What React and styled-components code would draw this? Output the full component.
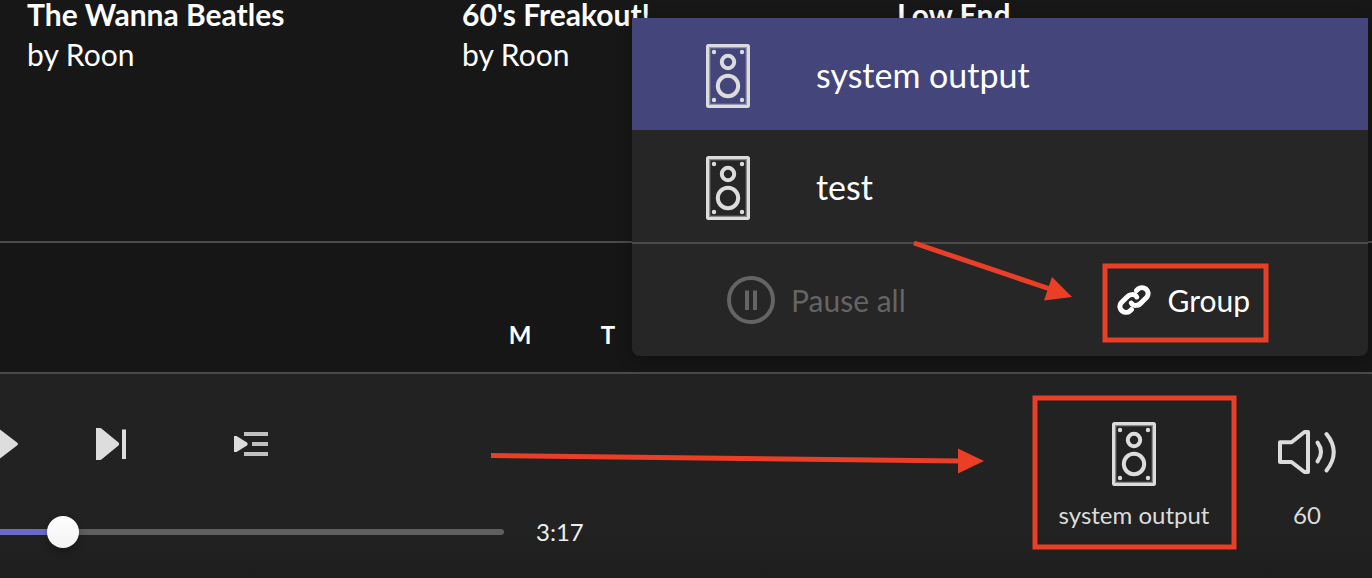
import { useState } from "react";
import styled, { createGlobalStyle } from "styled-components";

const GlobalStyle = createGlobalStyle`
* {
    box-sizing: border-box;
}
body {
    margin: 0;
    background: #171717;
    color: #ffffff;
    font-family: Lato, "Liberation Sans", sans-serif;
}
button, input {
    font: inherit;
    color: inherit;
}
`

const albums = [
    { title: "The Wanna Beatles", by: "by Roon" },
    { title: "60's Freakout!", by: "by Roon" },
    { title: "Low End" },
]

const days = ["M", "T"]
const zones = ["system output", "test"]

const SpeakerIcon = () => (
    <svg width="44" height="64" viewBox="0 0 44 64" fill="none" stroke="currentColor" aria-hidden="true">
        <rect x="1.5" y="1.5" width="41" height="61" rx="1" strokeWidth="3" />
        <rect x="3.5" y="3.5" width="37" height="57" strokeWidth="1.6" opacity="0.55" />
        <circle cx="22" cy="18" r="6.2" strokeWidth="4" />
        <circle cx="22" cy="42" r="10.2" strokeWidth="4" />
        <g fill="currentColor" stroke="none">
            <circle cx="8" cy="8" r="2.2" />
            <circle cx="36" cy="8" r="2.2" />
            <circle cx="8" cy="56" r="2.2" />
            <circle cx="36" cy="56" r="2.2" />
        </g>
    </svg>
)

const VolumeIcon = () => (
    <svg width="60" height="64" viewBox="0 0 60 64" fill="none" stroke="currentColor" strokeWidth="4" strokeLinecap="round" strokeLinejoin="round" aria-hidden="true">
        <path d="M3 20.2 H14.5 L27.5 10 H31 V50 H27.5 L14.5 40 H3 Z" />
        <path d="M40.5 20.5 Q47.5 30 40.5 39.5" />
        <path d="M49.5 12 Q64 30 49.5 48.5" />
    </svg>
)

const PauseIcon = () => (
    <svg width="48" height="48" viewBox="0 0 48 48" fill="none" stroke="currentColor" aria-hidden="true">
        <circle cx="24" cy="24" r="22" strokeWidth="4" />
        <path d="M20 14.5 V34 M28 14.5 V34" strokeWidth="4" />
    </svg>
)

const LinkIcon = () => (
    <svg width="34" height="30" viewBox="0 0 34 30" fill="none" stroke="currentColor" strokeWidth="5" strokeLinecap="round" aria-hidden="true">
        <path d="M19.5 5.5 L21 4 C26 0 34 5.5 30 12 L24.5 17.5 C21.5 21 16 21.5 14.3 18" />
        <path d="M14.5 24.5 L13 26 C8 30 0 24.5 4 18 L9.5 12.5 C12.5 9 18 8.5 19.7 12" />
    </svg>
)

const PlayIcon = () => (
    <svg width="20" height="44" viewBox="0 0 20 44" fill="currentColor" aria-hidden="true">
        <path d="M-6 3 L17 20.5 Q19 22 17 23.5 L-6 41 Z" />
    </svg>
)

const NextIcon = () => (
    <svg width="30" height="44" viewBox="0 0 30 44" fill="currentColor" aria-hidden="true">
        <path d="M0 6 H4 Q5 6 6 7 L22.5 20.5 Q24 22 22.5 23.5 L6 37 Q5 38 4 38 H0 Z" />
        <rect x="26" y="7.5" width="4" height="29.5" />
    </svg>
)

const QueueIcon = () => (
    <svg width="34" height="44" viewBox="0 0 34 44" fill="currentColor" aria-hidden="true">
        <path d="M0 14 H2.5 L13 20.5 Q14.5 22 13 23.5 L2.5 30 H0 Z" />
        <path d="M10 10 H34 V14 H10 Z M18 20 H34 V24 H18 Z M10 30 H34 V34 H10 Z" opacity="0.85" />
    </svg>
)

const Player = () => {
    const [position, setPosition] = useState(10)

    return (
        <Controls>
            <Transport>
                <IconButton aria-label="Play"><PlayIcon /></IconButton>
                <IconButton aria-label="Next" $space={76}><NextIcon /></IconButton>
                <IconButton aria-label="Queue" $space={108}><QueueIcon /></IconButton>
            </Transport>
            <SeekRow>
                <Seek
                    type="range"
                    aria-label="Track position"
                    value={position}
                    $value={position}
                    onChange={(e) => setPosition(Number(e.target.value))}
                />
                <span>3:17</span>
            </SeekRow>
        </Controls>
    )
}

const App = () => {
    const [zone, setZone] = useState("system output")

    return (
        <Page>
            <GlobalStyle />
            <Albums>
                {albums.map((album) => (
                    <Album key={album.title}>
                        <h3>{album.title}</h3>
                        {album.by && <p>{album.by}</p>}
                    </Album>
                ))}
            </Albums>
            <Days>
                {days.map((day) => <span key={day}>{day}</span>)}
            </Days>
            <Footer>
                <Player />
                <Outputs>
                    <OutputButton>
                        <SpeakerIcon />
                        <span>{zone}</span>
                    </OutputButton>
                    <OutputButton $narrow aria-label="Volume 60">
                        <VolumeIcon />
                        <span>60</span>
                    </OutputButton>
                </Outputs>
                <ZoneMenu>
                    {zones.map((name) => (
                        <ZoneRow key={name} $active={name === zone} onClick={() => setZone(name)}>
                            <SpeakerIcon />
                            <span>{name}</span>
                        </ZoneRow>
                    ))}
                    <MenuActions>
                        <ActionButton disabled><PauseIcon />Pause all</ActionButton>
                        <ActionButton><LinkIcon />Group</ActionButton>
                    </MenuActions>
                </ZoneMenu>
                {/* red boxes and arrows over the menu and the footer */}
                <Marks width="892" height="348" viewBox="480 230 892 348" aria-hidden="true">
                    <rect x="1105" y="266" width="161" height="74" />
                    <rect x="1035" y="398" width="199" height="149" />
                    <path d="M914 243 L1050 289" />
                    <path d="M491 455.5 L960 461" />
                    <polygon points="1072,297 1052,277 1044,300.5" />
                    <polygon points="984,461 958,448.5 958,473.5" />
                </Marks>
            </Footer>
        </Page>
    )
}

export default App;

const Page = styled.div`
display: flex;
flex-direction: column;
min-height: 100vh;
overflow: hidden;
`

const Albums = styled.section`
flex: 1;
display: grid;
grid-template-columns: repeat(3, 435px);
padding-left: 27px;
border-bottom: 2px solid #4b4b4e;
`

const Album = styled.article`
margin-top: -6px;
font-size: 30px;
line-height: 40px;

h3, p {
    margin: 0;
    font-size: inherit;
}
h3 {
    font-weight: bold;
}
`

const Days = styled.div`
display: flex;
padding: 76px 0 21px 476px;
background: #161616;
font-size: 24px;
font-weight: bold;
line-height: 32px;

span {
    width: 88px;
    text-align: center;
}
`

const Footer = styled.footer`
position: relative;
display: flex;
justify-content: space-between;
padding: 48px 16px 30px 0;
border-top: 2px solid #4b4b4e;
background: linear-gradient(#222222 75%, #1e1e1e);
`

const Controls = styled.div`
display: flex;
flex-direction: column;
gap: 50px;
`

const Transport = styled.div`
display: flex;
color: #dddddd;
`

const IconButton = styled.button`
display: flex;
margin: 0 0 0 ${(props) => props.$space || 0}px;
padding: 0;
border: none;
background: none;
cursor: pointer;
`

const SeekRow = styled.div`
display: flex;
align-items: center;
gap: 32px;
font-size: 24px;
line-height: 32px;
color: #eeeeee;
`

const Seek = styled.input`
appearance: none;
width: 504px;
height: 32px;
margin: 0;
background: none;
cursor: pointer;

&::-webkit-slider-runnable-track {
    height: 6px;
    border-radius: 0 3px 3px 0;
    background: linear-gradient(
        to right,
        #6b6ac9 calc(16px + (100% - 32px) * ${(props) => props.$value / 100}),
        #5f5f5f 0
    );
}
&::-webkit-slider-thumb {
    appearance: none;
    width: 32px;
    height: 32px;
    margin-top: -13px;
    border-radius: 50%;
    background: linear-gradient(#ffffff, #f2f2f2);
    box-shadow: 0 4px 8px rgba(0, 0, 0, 0.3);
}
`

const Outputs = styled.div`
display: flex;
align-items: flex-start;
gap: 24px;
color: #dcdcdc;
`

const OutputButton = styled.button`
display: flex;
flex-direction: column;
align-items: center;
gap: 13px;
width: ${(props) => (props.$narrow ? 98 : 200)}px;
padding: 0;
border: none;
background: none;
font-size: 24px;
line-height: 32px;
cursor: pointer;
`

const ZoneMenu = styled.div`
position: absolute;
right: 4px;
bottom: calc(100% + 18px);
width: 736px;
border-radius: 0 0 8px 8px;
background: #262626;
box-shadow: 0 4px 16px rgba(0, 0, 0, 0.3);
`

const ZoneRow = styled.button`
display: flex;
align-items: center;
gap: 66px;
width: 100%;
height: 112px;
padding: 0 74px;
border: none;
background: ${(props) => (props.$active ? "#44457b" : "none")};
font-size: 34px;
cursor: pointer;

svg {
    margin-top: 4px;
    color: #dcdcdc;
}
`

const MenuActions = styled.div`
display: flex;
justify-content: space-between;
align-items: center;
height: 114px;
padding: 0 118px 0 95px;
border-top: 2px solid #4b4b4e;
`

const ActionButton = styled.button`
display: flex;
align-items: center;
gap: 16px;
padding: 0;
border: none;
background: none;
font-size: 30px;
cursor: pointer;

&:disabled {
    color: #646464;
    cursor: default;
}
`

const Marks = styled.svg`
position: absolute;
right: 0;
bottom: 0;
pointer-events: none;

rect, path {
    fill: none;
    stroke: #ea3f26;
    stroke-width: 5px;
}
polygon {
    fill: #ea3f26;
}
`
